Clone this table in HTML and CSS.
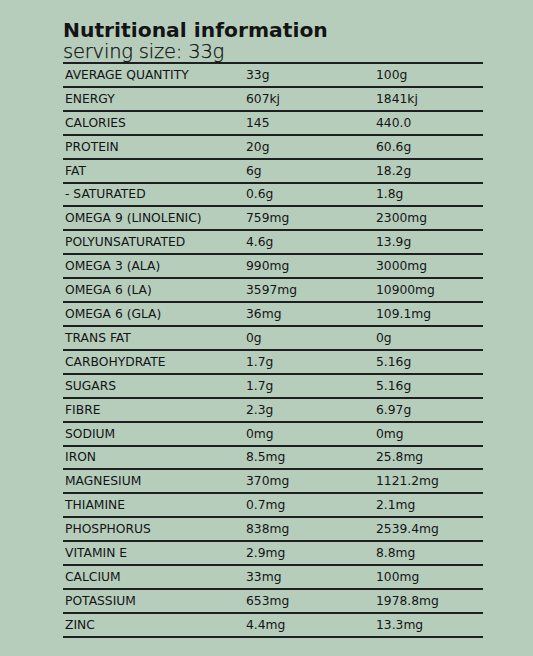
FILE: index.html
```html
<!DOCTYPE html>
<html>
<head>
<meta charset="utf-8">
<link rel="stylesheet" href="styles.css">
</head>
<body>
<div class="panel">
  <h1 class="title">Nutritional information</h1>
  <p class="serving">serving size: 33g</p>
  <div class="table">
    <div class="row"><span>AVERAGE QUANTITY</span><span>33g</span><span>100g</span></div>
    <div class="row"><span>ENERGY</span><span>607kj</span><span>1841kj</span></div>
    <div class="row"><span>CALORIES</span><span>145</span><span>440.0</span></div>
    <div class="row"><span>PROTEIN</span><span>20g</span><span>60.6g</span></div>
    <div class="row"><span>FAT</span><span>6g</span><span>18.2g</span></div>
    <div class="row"><span>- SATURATED</span><span>0.6g</span><span>1.8g</span></div>
    <div class="row"><span>OMEGA 9 (LINOLENIC)</span><span>759mg</span><span>2300mg</span></div>
    <div class="row"><span>POLYUNSATURATED</span><span>4.6g</span><span>13.9g</span></div>
    <div class="row"><span>OMEGA 3 (ALA)</span><span>990mg</span><span>3000mg</span></div>
    <div class="row"><span>OMEGA 6 (LA)</span><span>3597mg</span><span>10900mg</span></div>
    <div class="row"><span>OMEGA 6 (GLA)</span><span>36mg</span><span>109.1mg</span></div>
    <div class="row"><span>TRANS FAT</span><span>0g</span><span>0g</span></div>
    <div class="row"><span>CARBOHYDRATE</span><span>1.7g</span><span>5.16g</span></div>
    <div class="row"><span>SUGARS</span><span>1.7g</span><span>5.16g</span></div>
    <div class="row"><span>FIBRE</span><span>2.3g</span><span>6.97g</span></div>
    <div class="row"><span>SODIUM</span><span>0mg</span><span>0mg</span></div>
    <div class="row"><span>IRON</span><span>8.5mg</span><span>25.8mg</span></div>
    <div class="row"><span>MAGNESIUM</span><span>370mg</span><span>1121.2mg</span></div>
    <div class="row"><span>THIAMINE</span><span>0.7mg</span><span>2.1mg</span></div>
    <div class="row"><span>PHOSPHORUS</span><span>838mg</span><span>2539.4mg</span></div>
    <div class="row"><span>VITAMIN E</span><span>2.9mg</span><span>8.8mg</span></div>
    <div class="row"><span>CALCIUM</span><span>33mg</span><span>100mg</span></div>
    <div class="row"><span>POTASSIUM</span><span>653mg</span><span>1978.8mg</span></div>
    <div class="row"><span>ZINC</span><span>4.4mg</span><span>13.3mg</span></div>
  </div>
</div>
</body>
</html>
```
FILE: styles.css
```css
html, body {
  margin: 0;
  padding: 0;
  background: #b6cdbc;
}
body {
  font-family: "DejaVu Sans", sans-serif;
  color: #141414;
  width: 533px;
  height: 656px;
}
.panel {
  padding: 19px 50px 0 63px;
}
.title {
  margin: 0;
  font-size: 20.3px;
  font-weight: bold;
  line-height: 23px;
}
.serving {
  margin: 0;
  font-size: 19.5px;
  font-weight: 200;
  line-height: 20px;
  letter-spacing: -0.2px;
  color: #0f0f0f;
  -webkit-text-stroke: 0.25px #0f0f0f;
}
.table {
  margin-top: 0;
  border-top: 2px solid #1d201e;
}
.row {
  display: grid;
  grid-template-columns: 181px 130px 1fr;
  height: 21.92px;
  align-items: center;
  border-bottom: 2px solid #1d201e;
  font-size: 12.3px;
  padding-left: 2px;
}
```
